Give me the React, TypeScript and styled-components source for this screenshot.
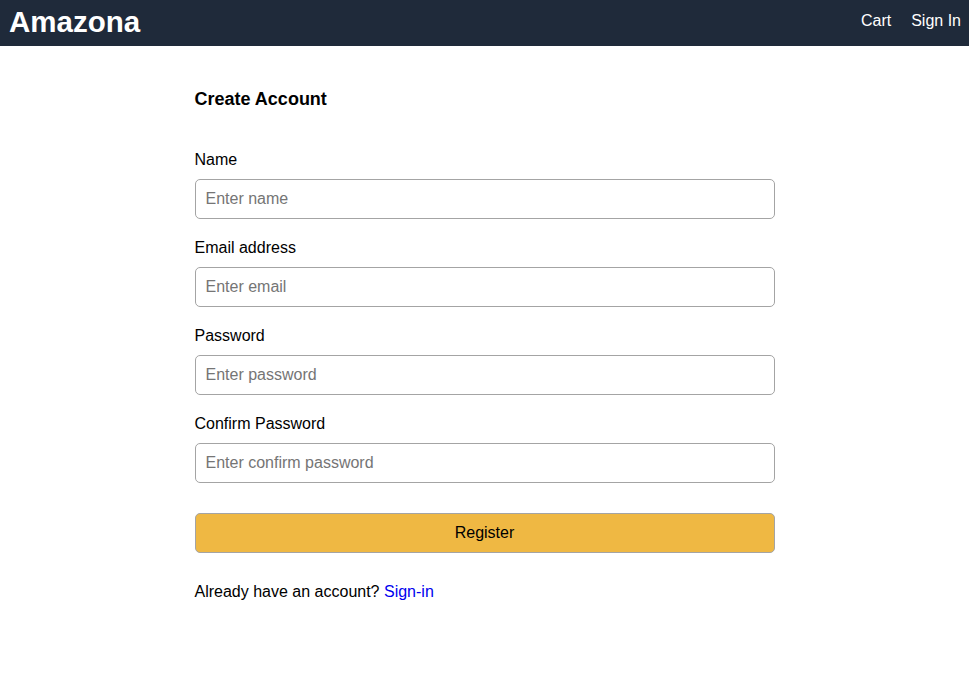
import React from "react";
import styled, { createGlobalStyle } from "styled-components";

const GlobalStyle = createGlobalStyle`
  html, body { margin: 0; padding: 0; background: #fff; }
  body { font-family: "Liberation Sans", Helvetica, Arial, sans-serif; font-size: 16px; color: #000; }
  * { box-sizing: border-box; }
`;

const Header = styled.header`
  height: 46px;
  background: #1f2a3a;
  display: flex;
  align-items: center;
  justify-content: space-between;
  padding: 0 8px 0 9px;
`;

const Brand = styled.a`
  color: #fff;
  font-size: 29.5px;
  font-weight: bold;
  text-decoration: none;
  line-height: 1;
  margin-top: -3px;
`;

const Nav = styled.nav`
  display: flex;
  gap: 20px;
  margin-top: -4px;
`;

const NavLink = styled.a`
  color: #fff;
  text-decoration: none;
  font-size: 16px;
`;

const Main = styled.main`
  padding-top: 23px;
`;

const Form = styled.form`
  max-width: 600px;
  margin: 0 auto;
  display: flex;
  flex-direction: column;
`;

const Group = styled.div<{ $top?: number }>`
  display: flex;
  flex-direction: column;
  gap: 10px;
  margin: 10px;
  margin-top: ${(p) => (p.$top ?? 10)}px;
`;

const Title = styled.h1`
  font-size: 18px;
  font-weight: bold;
  margin: 10px 0;
`;

const Label = styled.label`
  font-size: 16px;
`;

const Input = styled.input`
  font-family: inherit;
  font-size: 16px;
  padding: 10px;
  height: 40px;
  border: 1px solid #a4a4a4;
  border-radius: 5px;
  outline: none;
  &::placeholder { color: #757575; }
`;

const Button = styled.button`
  font-family: inherit;
  font-size: 16px;
  height: 40px;
  padding: 10px;
  background: #efb843;
  border: 1px solid #a4a4a4;
  border-radius: 5px;
  color: #000;
  cursor: pointer;
`;

const Footer = styled.div`
  font-size: 16px;
  margin-top: 10px;
  & a { color: #0000ee; text-decoration: none; }
`;

const fields = [
  { label: "Name", placeholder: "Enter name", type: "text" },
  { label: "Email address", placeholder: "Enter email", type: "email" },
  { label: "Password", placeholder: "Enter password", type: "password" },
  { label: "Confirm Password", placeholder: "Enter confirm password", type: "password" },
];

export default function App() {
  return (
    <>
      <GlobalStyle />
      <Header>
        <Brand href="#">Amazona</Brand>
        <Nav>
          <NavLink href="#">Cart</NavLink>
          <NavLink href="#">Sign In</NavLink>
        </Nav>
      </Header>
      <Main>
        <Form onSubmit={(e) => e.preventDefault()}>
          <Group>
            <Title>Create Account</Title>
          </Group>
          {fields.map((f, i) => (
            <Group key={f.label} $top={i === 0 ? 21 : 10}>
              <Label>{f.label}</Label>
              <Input type={f.type} placeholder={f.placeholder} />
            </Group>
          ))}
          <Group $top={20}>
            <Button type="submit">Register</Button>
          </Group>
          <Group>
            <Footer>
              Already have an account? <a href="#">Sign-in</a>
            </Footer>
          </Group>
        </Form>
      </Main>
    </>
  );
}
